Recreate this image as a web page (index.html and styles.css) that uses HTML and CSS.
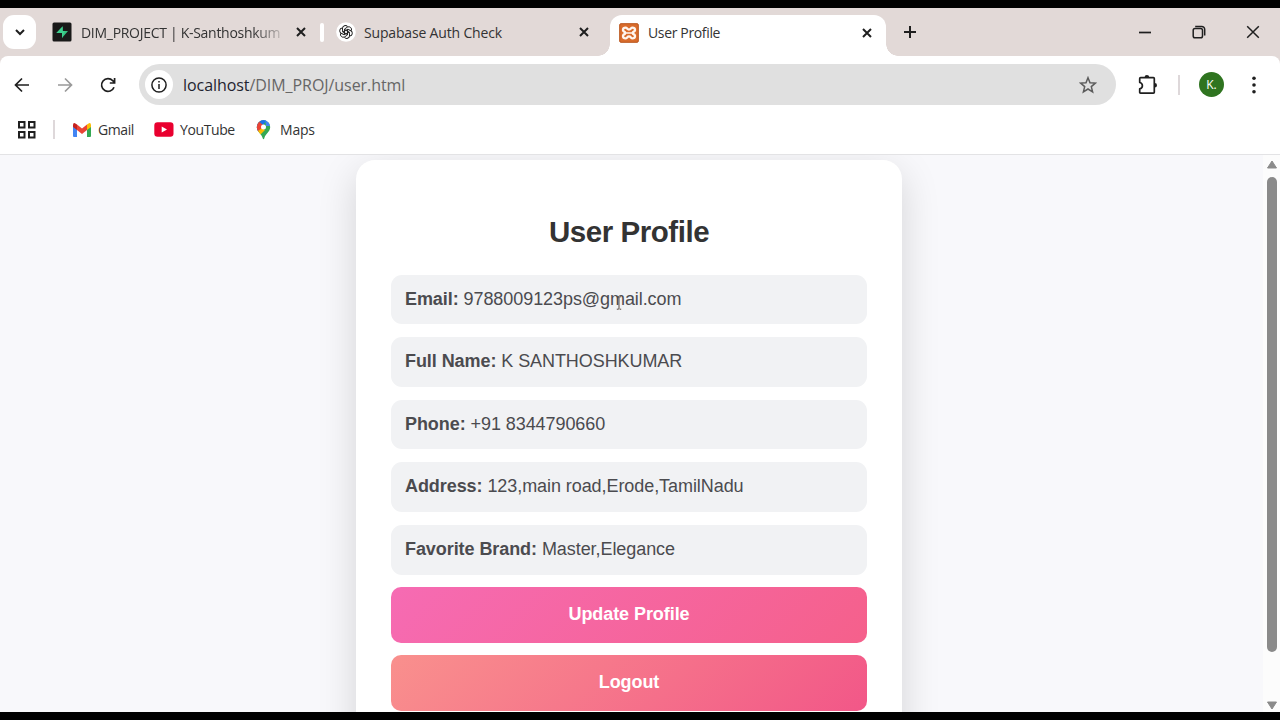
FILE: index.html
```html
<!DOCTYPE html>
<html lang="en">
<head>
<meta charset="utf-8">
<title>User Profile</title>
<link rel="stylesheet" href="styles.css">
</head>
<body>
<div class="window">
  <header class="tabstrip">
    <span class="tab-search"><svg width="12" height="12" viewBox="0 0 12 12"><path d="M2 4l4 4 4-4" class="ink heavy"/></svg></span>
    <div class="tab tab-first">
      <svg width="20" height="20" viewBox="0 0 20 20"><rect x="0.5" y="0.5" width="19" height="19" rx="1.5" fill="#191919"/><path d="M10.6 4.2L4.2 11h5v-1L10.6 9z" fill="#3ecf8e"/><path d="M10 16l6-7h-5.2v2.2H10z" fill="#35c07f"/><path d="M10.6 4.2V9h2.2L10 16v-5H8z" fill="#3ecf8e"/></svg>
      <span class="tab-title faded-end">DIM_PROJECT | K-Santhoshkum</span>
      <svg class="close" width="12" height="12" viewBox="0 0 12 12"><path d="M2 2l8 8M10 2l-8 8" class="ink heavy"/></svg>
    </div>
    <span class="tab-sep"></span>
    <div class="tab tab-second">
      <svg width="20" height="20" viewBox="-10 -10 20 20"><circle r="9.8" fill="#fff"/><g fill="none" stroke="#222" stroke-width="1.05" transform="scale(.94)"><path id="petal" d="M-1.6 2.8V-3.2L1.5-5.2A3 3 0 0 1 5.7-1.4"/><use href="#petal" transform="rotate(60)"/><use href="#petal" transform="rotate(120)"/><use href="#petal" transform="rotate(180)"/><use href="#petal" transform="rotate(240)"/><use href="#petal" transform="rotate(300)"/></g></svg>
      <span class="tab-title">Supabase Auth Check</span>
      <svg class="close" width="12" height="12" viewBox="0 0 12 12"><path d="M2 2l8 8M10 2l-8 8" class="ink heavy"/></svg>
    </div>
    <div class="tab tab-active">
      <svg width="20" height="20" viewBox="0 0 20 20"><rect x="0.7" y="0.7" width="18.6" height="18.6" rx="1.2" fill="#d96c2c" stroke="#b9541b"/><path d="M6.4 4.6C3.5 4.6 3.3 8 5.5 8.8 6.4 9.2 6.4 10.800 5.500 11.200 3.300 12 3.500 15.400 6.400 15.400 8.300 15.400 8 13.400 10 13.400S11.700 15.400 13.600 15.400C16.500 15.400 16.700 12 14.500 11.200 13.600 10.800 13.600 9.200 14.500 8.800 16.700 8 16.500 4.600 13.600 4.600 11.700 4.600 12 6.600 10 6.600S8.300 4.600 6.400 4.600z" fill="none" stroke="#fff6ef" stroke-width="2.300"/><path d="M6.500 10h7" stroke="#fff6ef" stroke-width="1.500"/></svg>
      <span class="tab-title">User Profile</span>
      <svg class="close" width="12" height="12" viewBox="0 0 12 12"><path d="M2 2l8 8M10 2l-8 8" class="ink heavy"/></svg>
    </div>
    <svg class="new-tab" width="14" height="14" viewBox="0 0 14 14"><path d="M7 1v12M1 7h12" class="ink heavy"/></svg>
    <div class="controls">
      <svg width="14" height="14" viewBox="0 0 14 14"><path d="M1 7.500h12" class="ink"/></svg>
      <svg width="14" height="14" viewBox="0 0 14 14"><rect x="1.200" y="3.500" width="9.300" height="9.300" rx="1.800" class="ink thin"/><path d="M3.200 1.400h6.500a3 3 0 0 1 3 3v6.200" class="ink thin"/></svg>
      <svg width="14" height="14" viewBox="0 0 14 14"><path d="M1.200 1.200l11.600 11.600M12.800 1.200L1.200 12.800" class="ink thin"/></svg>
    </div>
  </header>

  <div class="toolbar">
    <svg class="nav-icon" width="16" height="16" viewBox="0 0 16 16"><path d="M15 8H2M8 1.500L1.500 8 8 14.500" class="ink"/></svg>
    <svg class="nav-icon faded" width="16" height="16" viewBox="0 0 16 16"><path d="M1 8h13M8 1.500L14.500 8 8 14.500" class="ink"/></svg>
    <svg class="nav-icon" width="16" height="16" viewBox="0 0 16 16"><path d="M14 10.200A6.400 6.400 0 1 1 12.800 3.800L14.400 5.600M14.600 1v5H9.800" class="ink"/></svg>
    <div class="omnibox">
      <span class="site-info"><svg width="16" height="16" viewBox="0 0 16 16"><circle cx="8" cy="8" r="7.100" class="ink thin"/><path d="M8 7v5M8 4v1.600" class="ink thin"/></svg></span>
      <span class="url">localhost<span class="path">/DIM_PROJ/user.html</span></span>
      <svg class="star" width="18" height="18" viewBox="0 0 18 18"><path d="M9 1.700l2 5 5.400.400-4.100 3.500 1.300 5.300L9 13l-4.600 2.900 1.300-5.300L1.600 7.100 7 6.700z" fill="none" stroke="#5c5c5c" stroke-width="1.500"/></svg>
    </div>
    <svg class="extensions" width="20" height="22" viewBox="0 0 20 22"><path d="M2.600 3.600h12.800q.900 0 .900.900v13.800q0 .900-.900.900H2.600q-.900 0-.900-.900v-3.500c3.600-.900 3.600-5.400 0-6.300v-4q0-.900.900-.900z" class="ink" stroke-linejoin="round"/><path d="M6.600 3.300a2.300 2.300 0 0 1 4.600 0zM16.700 9a2.300 2.300 0 0 1 0 4.600z" fill="#1f1f1f"/></svg>
    <span class="toolbar-sep"></span>
    <span class="avatar">K.</span>
    <svg class="menu" width="4" height="20" viewBox="0 0 4 20"><g fill="#1f1f1f"><circle cx="2" cy="3.200" r="1.800"/><circle cx="2" cy="10" r="1.800"/><circle cx="2" cy="16.800" r="1.800"/></g></svg>
  </div>

  <nav class="bookmarks">
    <svg class="apps" width="18" height="18" viewBox="0 0 18 18"><path d="M1 1h5.500v5.500H1zM11 1h5.500v5.500H11zM1 11h5.500v5.500H1zM11 11h5.500v5.500H11z" class="ink heavy"/></svg>
    <span class="bookmark-sep"></span>
    <span class="bookmark gmail"><svg width="18" height="14" viewBox="0 0 18 14"><path d="M0 2v11q0 1 1 1h3V5z" fill="#4285f4"/><path d="M18 2v11q0 1-1 1h-3V5z" fill="#34a853"/><path d="M14 1.500L16 .200q2-.500 2 2V4l-4 3z" fill="#fbbc04"/><path d="M4 1.500L2 .200Q0-.300 0 2v2l4 3z" fill="#c5221f"/><path d="M4 1.500l5 4 5-4V7l-5 4-5-4z" fill="#ea4335"/></svg><span>Gmail</span></span>
    <span class="bookmark youtube"><svg width="20" height="15" viewBox="0 0 20 15"><rect x="0.300" y="0.300" width="19.200" height="14.400" rx="3.200" fill="#e9002f"/><path d="M7.700 4.400v6.200l5.300-3.100z" fill="#fff"/></svg><span>YouTube</span></span>
    <span class="bookmark maps"><svg width="15" height="20" viewBox="0 0 15 20"><defs><clipPath id="pin"><path d="M7.500.300A6.800 6.800 0 0 0 .800 7c0 5 4.700 6.400 6 11.500.200.900 1.200.900 1.400 0 1.300-5.100 6-6.500 6-11.500A6.800 6.800 0 0 0 7.500.300z"/></clipPath></defs><g clip-path="url(#pin)"><path d="M0 0h15v20H0z" fill="#34a853"/><path d="M0 0h11L0 13z" fill="#1a73e8"/><path d="M0 0h5l3 6-6 6-2-3z" fill="#ea4335"/><path d="M5-1h6L7 5 3.500 2z" fill="#1a73e8"/><path d="M2 11l4-3 3 2-5 5z" fill="#fbbc04"/><path d="M9-1l6 3v4h-5z" fill="#4285f4"/></g><circle cx="7.500" cy="7" r="2.500" fill="#fff"/></svg><span>Maps</span></span>
  </nav>

  <main class="viewport">
    <section class="card">
      <h1>User Profile</h1>
      <p class="field"><b>Email:</b> 9788009123ps@gmail.com</p>
      <p class="field"><b>Full Name:</b> K SANTHOSHKUMAR</p>
      <p class="field"><b>Phone:</b> +91 8344790660</p>
      <p class="field"><b>Address:</b> 123,main road,Erode,TamilNadu</p>
      <p class="field"><b>Favorite Brand:</b> Master,Elegance</p>
      <button class="update">Update Profile</button>
      <button class="logout">Logout</button>
    </section>
    <svg class="caret-pointer" width="6" height="14" viewBox="0 0 6 14"><path d="M.800.800h1.500L3 1.500 3.700.800h1.500M3 1.500v11M.800 13.200h1.500l.700-.700.700.700h1.500" fill="none" stroke="#5a4a42" stroke-width="1"/></svg>
    <aside class="scrollbar">
      <svg width="12" height="9" viewBox="0 0 12 9"><path d="M6 1l4.500 7h-9z" class="arrow"/></svg>
      <span class="thumb"></span>
      <svg width="12" height="9" viewBox="0 0 12 9"><path d="M6 8l4.500-7h-9z" class="arrow"/></svg>
    </aside>
  </main>
</div>
</body>
</html>
```
FILE: styles.css
```css
* { box-sizing: border-box; }
body { margin: 0; background: #000; font-family: "Open Sans", "Noto Sans", sans-serif; font-size: 14px; color: #333; }
svg { display: block; flex: none; }
.ink { fill: none; stroke: #1f1f1f; stroke-width: 1.7; }
.ink.heavy { stroke-width: 2; }
.ink.thin { stroke-width: 1.5; }
.window { height: 720px; padding: 8px 0; display: flex; flex-direction: column; overflow: hidden; }

.tabstrip { height: 48px; flex: none; display: flex; align-items: center; background: #e2d9d7; }
.tab-search { width: 33px; height: 34px; margin-left: 3px; border-radius: 11px; background: #fff; display: flex; align-items: center; justify-content: center; }
.tab { display: flex; align-items: center; height: 48px; }
.tab-title { flex: 1; margin-left: 10px; white-space: nowrap; }
.tab-first { width: 254px; margin-left: 16px; }
.tab-first .faded-end { flex: none; width: 200px; margin-left: 9px; letter-spacing: -0.29px; mask-image: linear-gradient(to right, #000 172px, rgba(0, 0, 0, .2) 200px); }
.tab-first .close { margin-left: 14px; }
.tab-sep { width: 4px; height: 19px; margin-left: 14px; border-radius: 2px; background: #fff; }
.tab-second { width: 254px; margin-left: 12px; }
.tab-second .tab-title { margin-left: 8px; letter-spacing: -0.17px; }
.tab-active { position: relative; width: 276px; height: 41px; align-self: flex-end; margin-left: 20px; padding: 0 13px 6px 9px; border-radius: 12px 12px 0 0; background: #fff; }
.tab-active .tab-title { margin-left: 9px; letter-spacing: -0.35px; }
.tab-active::before, .tab-active::after { content: ""; position: absolute; bottom: 0; width: 12px; height: 12px; }
.tab-active::before { left: -12px; background: radial-gradient(circle at 0 0, transparent 11.5px, #fff 12px); }
.tab-active::after { right: -12px; background: radial-gradient(circle at 100% 0, transparent 11.5px, #fff 12px); }
.new-tab { margin-left: 17px; }
.controls { display: flex; gap: 40px; margin-left: auto; margin-right: 20px; }

.toolbar { height: 58px; flex: none; display: flex; align-items: center; padding: 0 0 1px 14px; background: #fff; border-radius: 8px 8px 0 0; box-shadow: 0 -8px 0 8px #e2d9d7; clip-path: inset(0); }
.nav-icon { margin-right: 27px; }
.faded { opacity: .45; }
.omnibox { width: 977px; height: 41px; margin-left: -4px; display: flex; align-items: center; padding: 0 19px 0 6px; border-radius: 21px; background: #e0e0e0; }
.site-info { width: 28px; height: 29px; border-radius: 50%; background: #fff; display: flex; align-items: center; justify-content: center; }
.url { flex: 1; margin-left: 10px; font-size: 16px; letter-spacing: -0.06px; color: #1f2430; white-space: nowrap; }
.path { color: #666; }
.extensions { margin-left: 22px; }
.toolbar-sep { width: 2px; height: 20px; margin-left: 20px; background: #ded8da; }
.avatar { width: 25px; height: 25px; margin-left: 19px; border-radius: 50%; background: #2f7420; color: #fff; font-size: 12px; line-height: 25px; text-align: center; }
.menu { margin-left: 28px; }

.bookmarks { height: 41px; flex: none; display: flex; align-items: center; padding: 0 0 9px 18px; background: #fff; border-bottom: 1px solid #e3e3e5; }
.bookmark-sep { width: 2px; height: 19px; margin-left: 17px; background: #ded8da; }
.bookmark { display: flex; align-items: center; white-space: nowrap; letter-spacing: -0.4px; }
.gmail { width: 81px; margin-left: 18px; gap: 7px; }
.youtube { width: 102px; gap: 6px; }
.maps { gap: 9px; letter-spacing: -0.2px; }

.viewport { position: relative; flex: 1; min-height: 0; overflow: hidden; background: #f8f8fb; font-family: "Liberation Sans", Arial, sans-serif; }
.card { width: 546px; height: 620px; margin: 5px 0 0 356px; padding: 56px 35px 0; border-radius: 19px; background: #fff; box-shadow: 0 12px 38px rgba(0, 0, 0, .15); }
h1 { height: 32px; margin: 0 0 26.5px; font-size: 29.5px; line-height: 32px; letter-spacing: -0.45px; text-align: center; color: #333; }
.field { height: 49.8px; margin: 0 0 12.8px; padding-left: 14px; border-radius: 11px; background: #f1f2f4; font-size: 18px; line-height: 49.6px; letter-spacing: -0.07px; color: #4b4b4f; white-space: nowrap; }
button { display: block; width: 100%; height: 55.4px; margin: 0 0 12.6px; padding: 0 0 1px; border: 0; border-radius: 10px; font: bold 18px "Liberation Sans", Arial, sans-serif; letter-spacing: -0.07px; color: #fff; }
.update { background: linear-gradient(135deg, #f66bb3, #f5608b); }
.logout { background: linear-gradient(135deg, #f9908d, #f25788); }
.caret-pointer { position: absolute; left: 616px; top: 141px; }
.scrollbar { position: absolute; top: 0; right: 0; bottom: 0; width: 17px; padding: 5px 0 2px; display: flex; flex-direction: column; align-items: center; background: #fcfcfc; }
.thumb { width: 10px; height: 475px; margin: 8px 0 auto; border-radius: 5px; background: #8a8a8a; }
.arrow { fill: #8a8a8a; stroke: #8a8a8a; stroke-linejoin: round; }
```
